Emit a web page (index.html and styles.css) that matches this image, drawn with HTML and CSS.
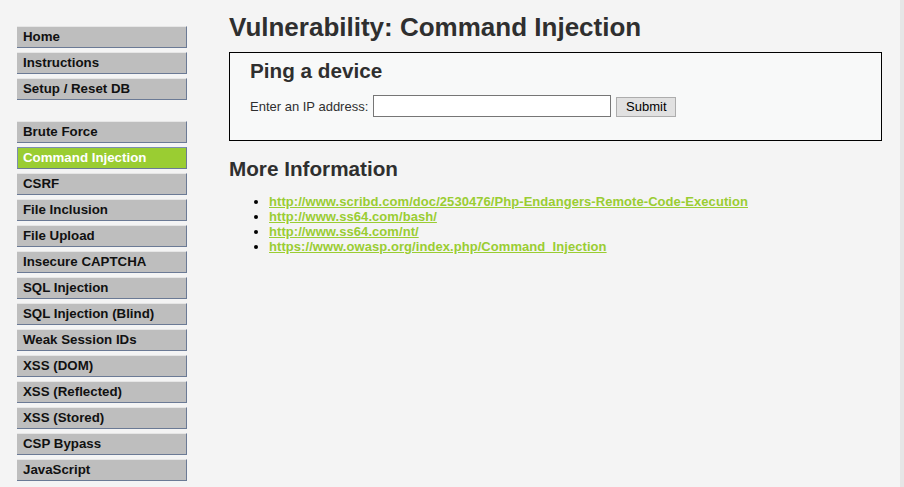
FILE: index.html
```html
<!DOCTYPE html>
<html>
<head>
<meta charset="utf-8">
<title>Vulnerability: Command Injection</title>
<link rel="stylesheet" href="styles.css">
</head>
<body>
<div class="page">
  <div class="sidebar">
    <ul class="menu">
      <li><a href="#">Home</a></li>
      <li><a href="#">Instructions</a></li>
      <li><a href="#">Setup / Reset DB</a></li>
    </ul>
    <ul class="menu">
      <li><a href="#">Brute Force</a></li>
      <li class="selected"><a href="#">Command Injection</a></li>
      <li><a href="#">CSRF</a></li>
      <li><a href="#">File Inclusion</a></li>
      <li><a href="#">File Upload</a></li>
      <li><a href="#">Insecure CAPTCHA</a></li>
      <li><a href="#">SQL Injection</a></li>
      <li><a href="#">SQL Injection (Blind)</a></li>
      <li><a href="#">Weak Session IDs</a></li>
      <li><a href="#">XSS (DOM)</a></li>
      <li><a href="#">XSS (Reflected)</a></li>
      <li><a href="#">XSS (Stored)</a></li>
      <li><a href="#">CSP Bypass</a></li>
      <li><a href="#">JavaScript</a></li>
    </ul>
  </div>
  <div class="content">
    <h1 class="title">Vulnerability: Command Injection</h1>
    <div class="vulnerable">
      <h2 class="box-title">Ping a device</h2>
      <form class="ping-form">
        <label class="label">Enter an IP address:</label>
        <input class="ip-input" type="text">
        <button class="submit" type="button">Submit</button>
      </form>
    </div>
    <h2 class="section-title">More Information</h2>
    <ul class="links">
      <li><a href="#">http://www.scribd.com/doc/2530476/Php-Endangers-Remote-Code-Execution</a></li>
      <li><a href="#">http://www.ss64.com/bash/</a></li>
      <li><a href="#">http://www.ss64.com/nt/</a></li>
      <li><a href="#">https://www.owasp.org/index.php/Command_Injection</a></li>
    </ul>
  </div>
  <div class="scrollstrip"></div>
</div>
</body>
</html>
```
FILE: styles.css
```css
html, body {
  margin: 0;
  padding: 0;
  height: 100%;
}
body {
  background: #f4f4f4;
  font-family: "Liberation Sans", Arial, sans-serif;
  font-size: 13px;
  color: #2f2f2f;
}
.page {
  display: flex;
  height: 100%;
}
.sidebar {
  width: 170px;
  margin-left: 17px;
  padding-top: 26px;
  flex-shrink: 0;
}
.menu {
  list-style: none;
  margin: 0 0 21px 0;
  padding: 0;
}
.menu li {
  margin-bottom: 4px;
}
.menu a {
  display: block;
  background: #bebebe;
  border-top: 1px solid #e6e6e6;
  border-right: 1px solid #6b7a95;
  border-bottom: 1px solid #6b7a95;
  line-height: 20px;
  padding: 0 6px;
  color: #111;
  font-weight: bold;
  font-size: 13.3px;
  text-decoration: none;
}
.menu li.selected a {
  background: #9acd32;
  color: #fff;
  border-top-color: #7c8db0;
  border-left: 1px solid #7c8db0;
  padding-left: 5px;
}
.content {
  margin-left: 42px;
  width: 653px;
  flex-shrink: 0;
}
.title {
  font-size: 26px;
  font-weight: bold;
  margin: 11px 0 9px 0;
  line-height: 32px;
  color: #2f2f2f;
}
.vulnerable {
  border: 1px solid #000;
  background: #f8f9f9;
  height: 87px;
  padding: 0 20px;
}
.box-title {
  font-size: 20.7px;
  margin: 6px 0 0 0;
  line-height: 24px;
  color: #2f2f2f;
}
.ping-form {
  display: flex;
  align-items: center;
  margin-top: 12px;
}
.label {
  font-size: 13px;
  margin-right: 5px;
}
.ip-input {
  width: 232px;
  height: 18px;
  border: 1px solid #767676;
  padding: 1px 2px;
  background: #fff;
  margin: 0;
}
.submit {
  margin-left: 5px;
  margin-top: 1px;
  height: 20px;
  width: 60px;
  font-family: "Liberation Sans", Arial, sans-serif;
  font-size: 13px;
  background: #e1e1e1;
  border: 1px solid #adadad;
  padding: 0;
  color: #000;
}
.section-title {
  font-size: 20.7px;
  margin: 16px 0 0 0;
  line-height: 24px;
  color: #2f2f2f;
}
.links {
  margin: 13px 0 0 0;
  padding-left: 40px;
  line-height: 15px;
}
.links li {
  color: #000;
}
.links a {
  color: #9acd32;
  font-weight: bold;
  font-size: 13px;
  letter-spacing: 0.06px;
}
.scrollstrip {
  margin-left: auto;
  width: 4px;
  background: #e6e6e6;
}
```
